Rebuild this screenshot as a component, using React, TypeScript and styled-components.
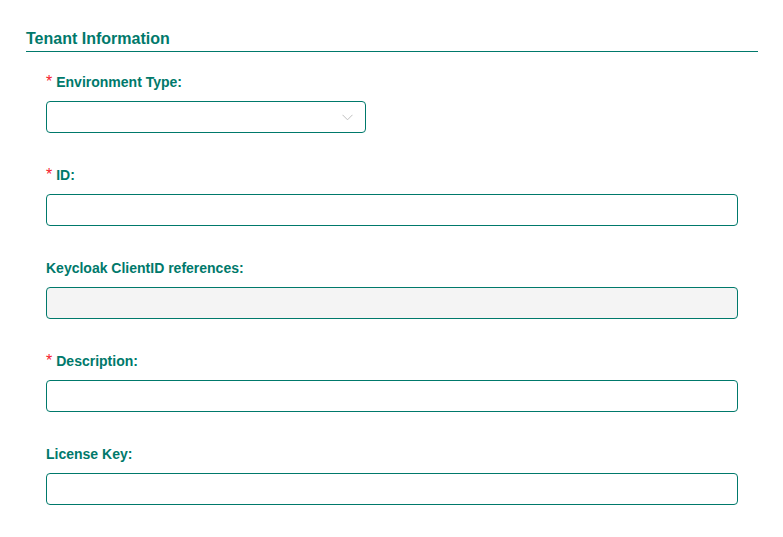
import React from 'react';
import styled, { createGlobalStyle } from 'styled-components';

const teal = '#00796b';

const GlobalStyle = createGlobalStyle`
  html, body {
    margin: 0;
    padding: 0;
    background: #ffffff;
    font-family: "Liberation Sans", Arial, sans-serif;
  }
`;

const Page = styled.div`
  padding: 27px 25px 20px 26px;
`;

const Heading = styled.h2`
  margin: 0;
  font-size: 16px;
  line-height: 24px;
  font-weight: 700;
  color: ${teal};
  border-bottom: 1px solid ${teal};
  padding-bottom: 0;
`;

const Fields = styled.div`
  display: flex;
  flex-direction: column;
  gap: 31px;
  padding: 19px 20px 0 20px;
`;

const Field = styled.div`
  display: flex;
  flex-direction: column;
  gap: 8px;
`;

const Label = styled.label`
  display: flex;
  align-items: center;
  height: 22px;
  font-size: 14px;
  font-weight: 700;
  color: ${teal};
`;

const Star = styled.span`
  color: #f5222d;
  font-size: 16px;
  margin-right: 4px;
  font-weight: 400;
`;

const Input = styled.input<{ $disabled?: boolean }>`
  box-sizing: border-box;
  width: 100%;
  height: 32px;
  border: 1px solid ${teal};
  border-radius: 4px;
  background: ${(p) => (p.$disabled ? '#f4f4f4' : '#fff')};
  outline: none;
  padding: 0 11px;
  font-family: inherit;
  font-size: 14px;
`;

const SelectBox = styled.div`
  box-sizing: border-box;
  width: 320px;
  height: 32px;
  border: 1px solid ${teal};
  border-radius: 4px;
  background: #fff;
  display: flex;
  align-items: center;
  justify-content: flex-end;
  padding-right: 12px;
`;

const Chevron = () => (
  <svg width="11" height="7" viewBox="0 0 11 7" fill="none">
    <path d="M0.5 0.8 L5.5 5.8 L10.5 0.8" stroke="#bfbfbf" strokeWidth="1" />
  </svg>
);

const FormField: React.FC<{ label: string; required?: boolean; children: React.ReactNode }> = ({ label, required, children }) => (
  <Field>
    <Label>
      {required && <Star>*</Star>}
      {label}
    </Label>
    {children}
  </Field>
);

export default function App() {
  return (
    <Page>
      <GlobalStyle />
      <Heading>Tenant Information</Heading>
      <Fields>
        <FormField label="Environment Type:" required>
          <SelectBox>
            <Chevron />
          </SelectBox>
        </FormField>
        <FormField label="ID:" required>
          <Input />
        </FormField>
        <FormField label="Keycloak ClientID references:">
          <Input $disabled disabled />
        </FormField>
        <FormField label="Description:" required>
          <Input />
        </FormField>
        <FormField label="License Key:">
          <Input />
        </FormField>
      </Fields>
    </Page>
  );
}
